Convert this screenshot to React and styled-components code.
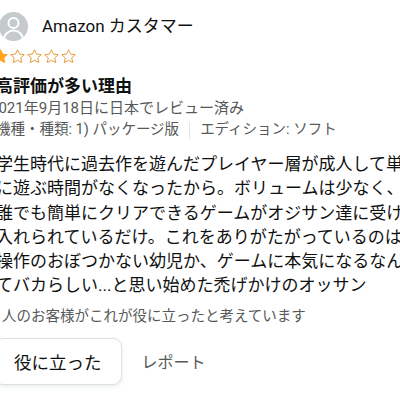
import React from 'react'
import styled, { createGlobalStyle } from 'styled-components'

const GlobalStyle = createGlobalStyle`
  html, body {
    margin: 0;
    padding: 0;
    background: #fff;
    overflow: hidden;
  }
  body {
    font-family: Roboto, "Noto Sans CJK JP", sans-serif;
    color: #0f1111;
  }
`

const Page = styled.div`
  width: 400px;
  height: 400px;
  overflow: hidden;
`

const Review = styled.div`
  margin-left: -4px;
  padding-top: 12px;
  display: flex;
  flex-direction: column;
`

const Profile = styled.div`
  display: flex;
  align-items: center;
  gap: 14px;
`

const Avatar = styled.div`
  width: 29px;
  height: 29px;
  margin-left: 3px;
  border-radius: 50%;
  background: #c5cacd;
  display: flex;
  align-items: flex-end;
  justify-content: center;
  overflow: hidden;
`

const Name = styled.span`
  font-size: 17px;
  line-height: 29px;
  color: #0f1111;
`

const Stars = styled.div`
  display: flex;
  margin-top: 7px;
  margin-left: -4px;
  height: 16px;
`

const Title = styled.h3`
  margin: 12px 0 0;
  font-size: 17px;
  font-weight: 700;
  line-height: 21px;
`

const Meta = styled.div`
  font-size: ${p => p.size || 15}px;
  line-height: 22px;
  margin-left: ${p => p.shift || 0}px;
  color: #565959;
  white-space: nowrap;
  display: flex;
  align-items: center;
`

const Divider = styled.span`
  display: inline-block;
  width: 1px;
  height: 17px;
  background: #e3e6e6;
  margin: 0 10px 0 10px;
`

const Body = styled.div`
  margin-top: 11px;
  font-size: 17px;
  line-height: 24.3px;
  color: #0f1111;
`

const Line = styled.div`
  white-space: nowrap;
`

const Helpful = styled.div`
  margin-top: 9px;
  margin-left: 6px;
  font-size: 14.5px;
  line-height: 20px;
  color: #565959;
`

const Actions = styled.div`
  display: flex;
  align-items: center;
  gap: 20px;
  margin-top: 11px;
`

const HelpButton = styled.button`
  height: 47px;
  margin-left: -2px;
  padding: 0 19px;
  border: 1px solid #dde0e0;
  border-radius: 9px;
  background: #fff;
  box-shadow: 0 2px 5px rgba(213, 217, 217, 0.45);
  font-family: "Noto Sans CJK JP", sans-serif;
  font-size: 17.5px;
  color: #0f1111;
`

const Report = styled.span`
  font-size: 16px;
  color: #565959;
`

const STAR = 'M12 2.5l2.9 6.1 6.6.8-4.9 4.6 1.3 6.6L12 17.3l-5.9 3.3 1.3-6.6-4.9-4.6 6.6-.8z'

const Star = ({ filled }) => (
  <svg width="17" height="17" viewBox="0 0 24 24">
    <path
      d={STAR}
      fill={filled ? '#ffa41c' : 'none'}
      stroke={filled ? '#ffa41c' : '#e89a3c'}
      strokeWidth="1.4"
      strokeLinejoin="round"
    />
  </svg>
)

const PersonIcon = () => (
  <svg width="29" height="29" viewBox="0 0 29 29">
    <circle cx="14.5" cy="11" r="5" fill="none" stroke="#fff" strokeWidth="2" />
    <path d="M5 28c0-5.5 4.2-9.5 9.5-9.5S24 22.5 24 28" fill="none" stroke="#fff" strokeWidth="2" />
  </svg>
)

const lines = [
  '学生時代に過去作を遊んだプレイヤー層が成人して単',
  'に遊ぶ時間がなくなったから。ボリュームは少なく、',
  '誰でも簡単にクリアできるゲームがオジサン達に受け',
  '入れられているだけ。これをありがたがっているのは',
  '操作のおぼつかない幼児か、ゲームに本気になるなん',
  'てバカらしい...と思い始めた禿げかけのオッサン',
]

export default function App() {
  return (
    <Page>
      <GlobalStyle />
      <Review>
        <Profile>
          <Avatar>
            <PersonIcon />
          </Avatar>
          <Name>Amazon カスタマー</Name>
        </Profile>
        <Stars>
          {[0, 1, 2, 3, 4].map(i => <Star key={i} filled={i === 0} />)}
        </Stars>
        <Title>高評価が多い理由</Title>
        <Meta shift={-6}>2021年9月18日に日本でレビュー済み</Meta>
        <Meta size={14.5}>
          機種・種類: 1) パッケージ版<Divider />エディション: ソフト
        </Meta>
        <Body>
          {lines.map((l, i) => <Line key={i}>{l}</Line>)}
        </Body>
        <Helpful>人のお客様がこれが役に立ったと考えています</Helpful>
        <Actions>
          <HelpButton>役に立った</HelpButton>
          <Report>レポート</Report>
        </Actions>
      </Review>
    </Page>
  )
}
